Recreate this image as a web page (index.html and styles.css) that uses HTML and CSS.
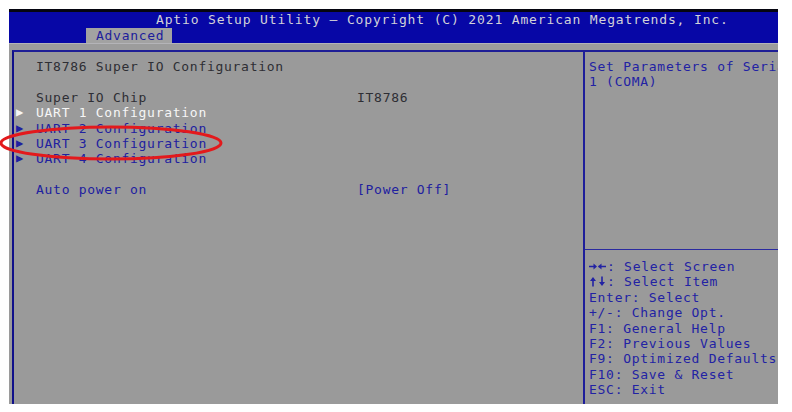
FILE: index.html
```html
<!DOCTYPE html>
<html lang="en">
<head>
<meta charset="utf-8">
<title>Aptio Setup Utility</title>
<link rel="stylesheet" href="styles.css">
</head>
<body>
<div class="screen">
  <div class="topline"></div>
  <header class="header">
    <div class="title">Aptio Setup Utility – Copyright (C) 2021 American Megatrends, Inc.</div>
    <nav class="tabs"><span class="tab">Advanced</span></nav>
  </header>
  <div class="strip"></div>
  <main class="main">
    <section class="menu">
      <div class="row heading"><span class="arrow"></span><span class="label">IT8786 Super IO Configuration</span></div>
      <div class="row blank"></div>
      <div class="row info"><span class="arrow"></span><span class="label">Super IO Chip</span><span class="value">IT8786</span></div>
      <div class="row link selected"><span class="arrow">▶</span><span class="label">UART 1 Configuration</span></div>
      <div class="row link"><span class="arrow">▶</span><span class="label">UART 2 Configuration</span></div>
      <div class="row link"><span class="arrow">▶</span><span class="label">UART 3 Configuration</span></div>
      <div class="row link"><span class="arrow">▶</span><span class="label">UART 4 Configuration</span></div>
      <div class="row blank"></div>
      <div class="row option"><span class="arrow"></span><span class="label">Auto power on</span><span class="value">[Power Off]</span></div>
    </section>
    <aside class="side">
      <div class="help-text">
        <div>Set Parameters of Serial Port</div>
        <div>1 (COMA)</div>
      </div>
      <div class="keys">
        <div class="key"><svg class="glyph" width="17" height="15" viewBox="0 0 17 15" aria-label="→←"><path d="M0 7.5H6M9.5 7.5H17" stroke="currentColor" stroke-width="1.6"/><path d="M4.5 4.5L8 7.5L4.5 10.5Z M12.5 4.5L9 7.5L12.5 10.5Z" fill="currentColor"/></svg>: Select Screen</div>
        <div class="key"><svg class="glyph" width="17" height="15" viewBox="0 0 17 15" aria-label="↑↓"><path d="M4 5.5V12.5M13 2.5V9.5" stroke="currentColor" stroke-width="1.6"/><path d="M1 7L4 3L7 7Z M10 8L13 12L16 8Z" fill="currentColor"/></svg>: Select Item</div>
        <div class="key">Enter: Select</div>
        <div class="key">+/-: Change Opt.</div>
        <div class="key">F1: General Help</div>
        <div class="key">F2: Previous Values</div>
        <div class="key">F9: Optimized Defaults</div>
        <div class="key">F10: Save &amp; Reset</div>
        <div class="key">ESC: Exit</div>
      </div>
    </aside>
  </main>
</div>
<svg class="mark" width="230" height="40" viewBox="0 0 230 40" aria-hidden="true">
  <ellipse cx="111" cy="18" rx="110" ry="16" fill="none" stroke="#e3191c" stroke-width="3"/>
</svg>
</body>
</html>
```

FILE: styles.css
```css
html, body {
  margin: 0;
  padding: 0;
  background: #ffffff;
}

body {
  position: relative;
  width: 792px;
  height: 412px;
  overflow: hidden;
  font-family: "DejaVu Sans Mono", "Liberation Mono", monospace;
  font-size: 13px;
  letter-spacing: 0.72px;
  line-height: 15.4px;
}

.screen {
  margin: 9px 0 0 9px;
  width: 769px;
  height: 395px;
  background: #9a9a9a;
  overflow: hidden;
  display: flex;
  flex-direction: column;
}

.topline {
  height: 3px;
  background: #050510;
  flex: none;
}

.header {
  height: 31px;
  background: #0707a6;
  flex: none;
  display: flex;
  flex-direction: column;
}

.title {
  padding-left: 147px;
  height: 16px;
  line-height: 16px;
  color: #d2d2d8;
  letter-spacing: 0.85px;
  white-space: nowrap;
}

.tabs {
  display: flex;
  padding-left: 77px;
}

.tab {
  width: 86px;
  height: 15px;
  line-height: 16px;
  background: #a2a2a2;
  color: #1d1d9c;
  padding-left: 10px;
  box-sizing: border-box;
}

.strip {
  height: 7px;
  flex: none;
  background: #9c9c9c;
  border-top: 1px solid #b4b4b8;
  box-sizing: border-box;
}

.main {
  flex: 1;
  display: flex;
  margin-left: 3px;
  border-top: 2px solid #1e1e96;
  border-left: 2px solid #10108a;
}

.menu {
  width: 571px;
  flex: none;
  padding-top: 7px;
  border-right: 2px solid #1e1e9a;
  box-sizing: border-box;
}

.row {
  display: flex;
  height: 15.4px;
  white-space: nowrap;
}

.arrow {
  width: 22px;
  flex: none;
  padding-left: 2px;
  box-sizing: border-box;
  font-size: 12px;
  letter-spacing: 0;
}

.label {
  width: 321px;
  flex: none;
}

.heading,
.info {
  color: #2e2e34;
}

.link,
.option {
  color: #2020a0;
}

.selected {
  color: #f6f6f6;
}

.side {
  flex: 1;
  display: flex;
  flex-direction: column;
  min-width: 0;
  color: #2222a4;
  white-space: nowrap;
}

.help-text {
  height: 198px;
  padding: 7px 0 0 4px;
  box-sizing: border-box;
  border-bottom: 1px solid #2a2aa0;
}

.keys {
  padding: 9px 0 0 4px;
}

.key {
  display: flex;
  height: 15.4px;
}

.glyph {
  flex: none;
  margin-right: 1px;
}

.mark {
  position: absolute;
  left: 0;
  top: 125px;
}
```
